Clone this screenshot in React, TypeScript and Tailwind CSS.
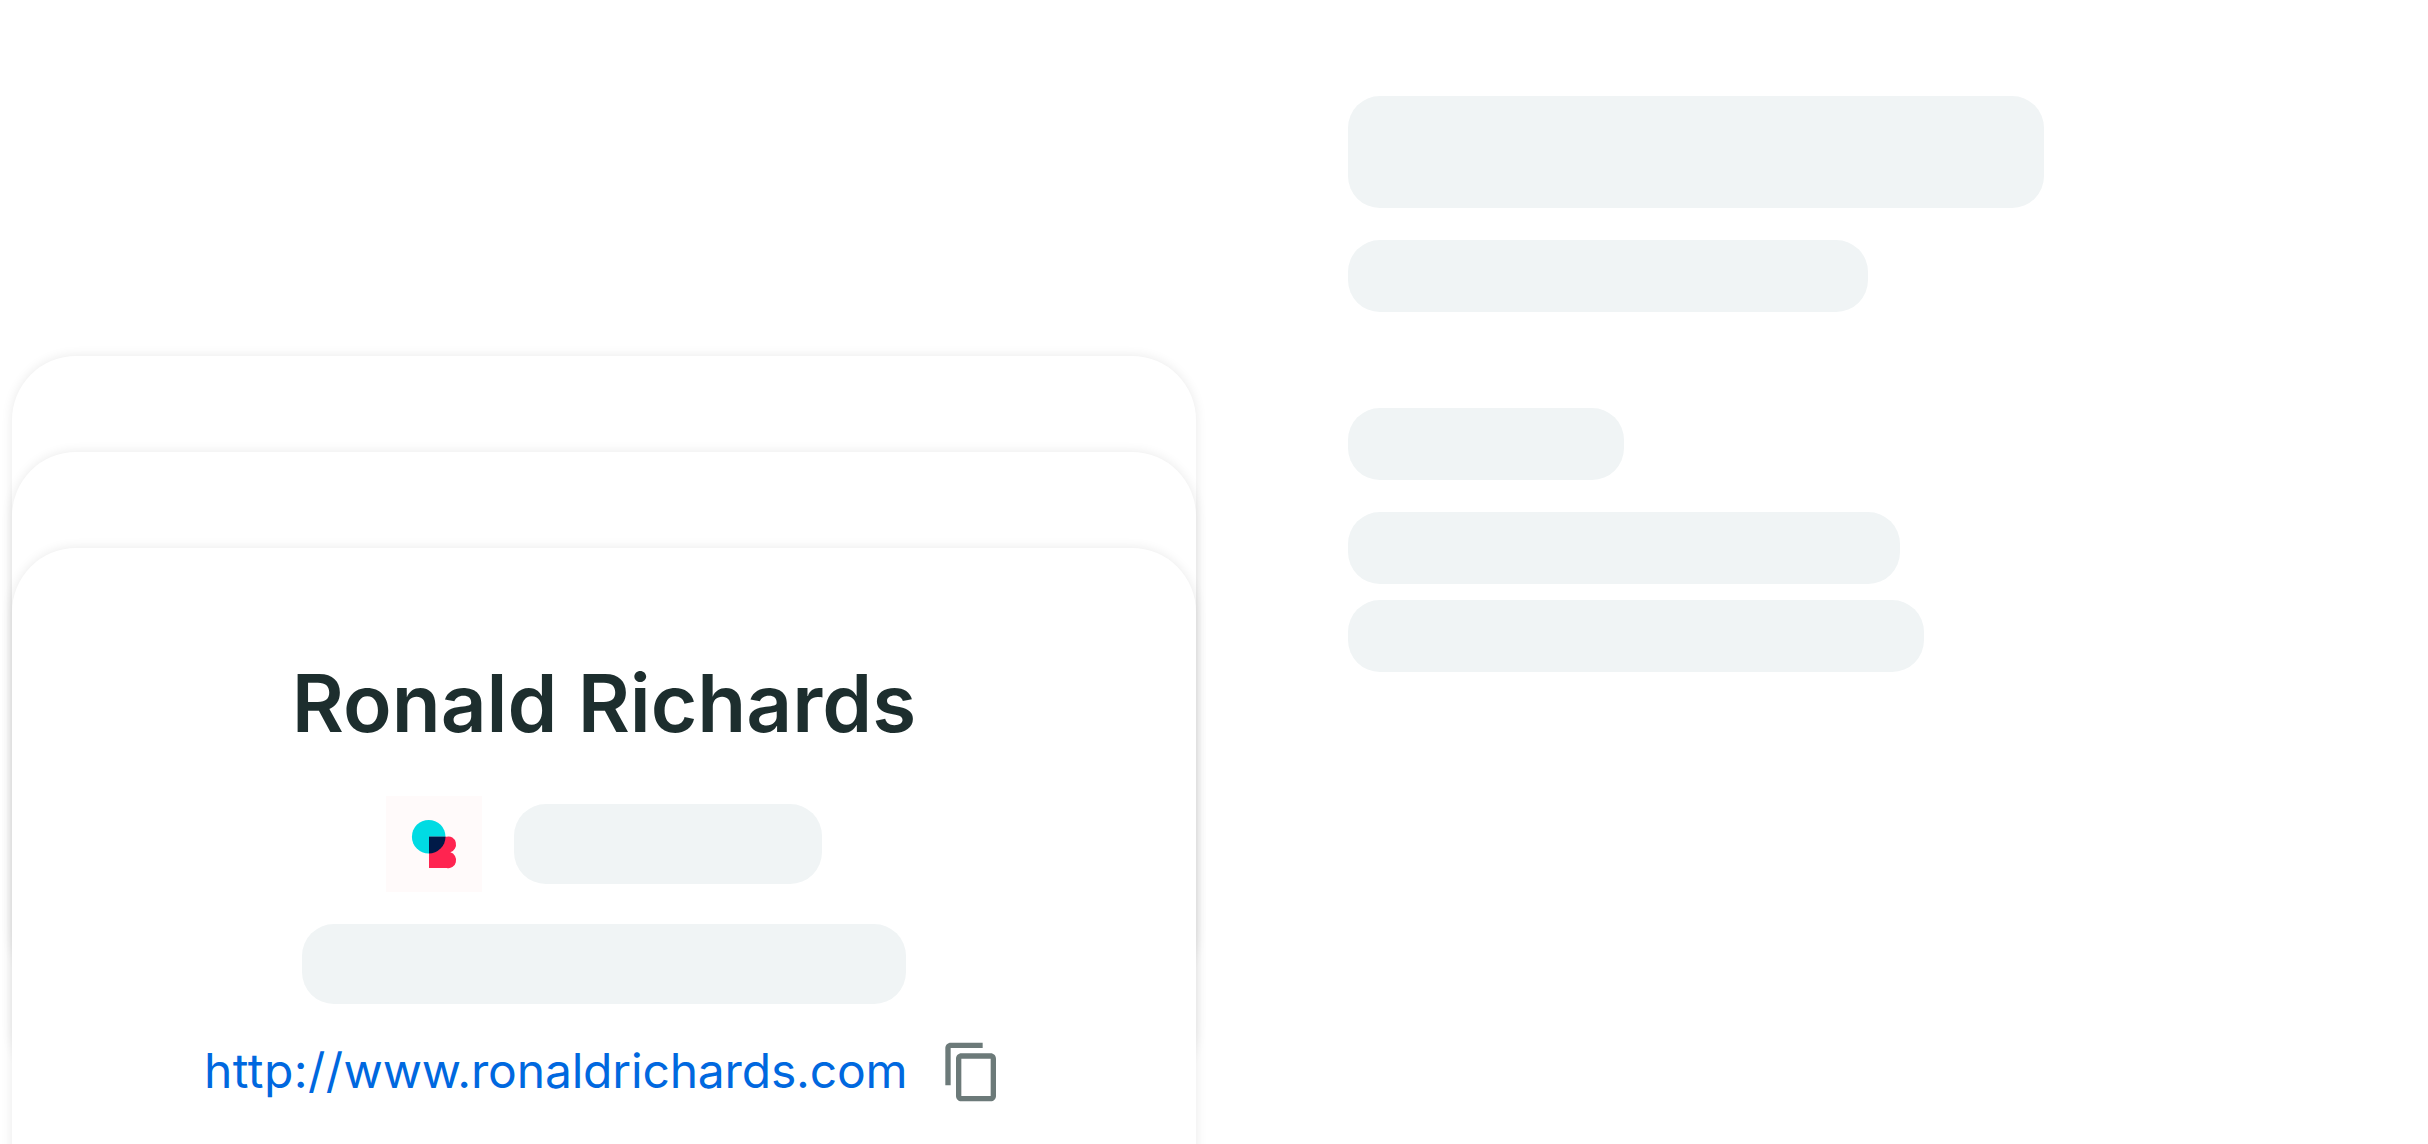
import type { ReactNode } from "react";

function Bone({ className }: { className: string }) {
  return <div className={`rounded-[32px] bg-[#f0f4f5] ${className}`} />;
}

function Card({ className = "", children }: { className?: string; children?: ReactNode }) {
  return (
    <div
      className={`w-[1184px] shrink-0 rounded-[64px] bg-white shadow-[0_0_12px_rgba(0,0,0,0.09)] ${className}`}
    >
      {children}
    </div>
  );
}

function Logo() {
  return (
    <svg viewBox="0 0 96 96" className="size-24 bg-[#fffafa]">
      <defs>
        <clipPath id="disc">
          <circle cx="42.7" cy="40.7" r="16.8" />
        </clipPath>
      </defs>
      <circle cx="42.7" cy="40.7" r="16.8" fill="#00dbe3" />
      <path d="M43 40.7h19a8 8 0 0 1 4 15.6A8 8 0 0 1 62 72H43z" fill="#ff2450" transform="translate(43 0) scale(0.93 1) translate(-43 0)" />
      <path d="M43 40.7h19v31.3H43z" fill="#001a48" clipPath="url(#disc)" />
    </svg>
  );
}

function CopyIcon() {
  return (
    <svg viewBox="0 0 24 24" className="size-16" fill="#6c7a79">
      <path d="M16 1H4c-1.1 0-2 .9-2 2v14h2V3h12V1zm3 4H8c-1.1 0-2 .9-2 2v14c0 1.1.9 2 2 2h11c1.1 0 2-.9 2-2V7c0-1.1-.9-2-2-2zm0 16H8V7h11v14z" />
    </svg>
  );
}

export default function App() {
  return (
    <main className="flex h-[1144px] w-[2428px] overflow-hidden bg-white font-['Inter',sans-serif]">
      <section className="flex w-[1348px] shrink-0 flex-col pt-[356px] pl-3">
        <Card className="h-[640px]" />
        <Card className="-mt-[544px] h-[640px]" />
        <Card className="-mt-[544px] flex h-[680px] flex-col items-center pt-[103px]">
          <h1 className="text-[80px] leading-[104px] font-semibold whitespace-nowrap text-[#1d2e2e]">
            Ronald Richards
          </h1>
          <div className="mt-[41px] flex items-center gap-8">
            <Logo />
            <Bone className="h-20 w-[308px]" />
          </div>
          <Bone className="mt-8 h-20 w-[604px]" />
          <div className="mt-9 flex h-16 w-[800px] items-center justify-between">
            <a
              href="#"
              className="-mt-0.5 text-[48px] leading-[64px] tracking-[-0.18px] whitespace-nowrap text-[#0068df] [font-feature-settings:'calt'_0]"
            >
              <span className="tracking-[0.45px]">http://</span>www.ronaldrichards.com
            </a>
            <CopyIcon />
          </div>
        </Card>
      </section>
      <section className="flex flex-col pt-24">
        <Bone className="h-28 w-[696px]" />
        <Bone className="mt-8 h-[72px] w-[520px]" />
        <Bone className="mt-24 h-[72px] w-[276px]" />
        <Bone className="mt-8 h-[72px] w-[552px]" />
        <Bone className="mt-4 h-[72px] w-[576px]" />
      </section>
    </main>
  );
}
